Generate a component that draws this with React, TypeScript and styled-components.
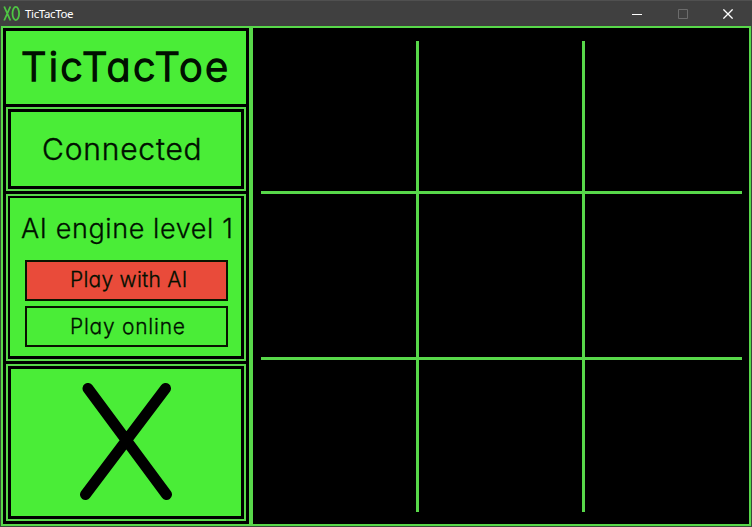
import React from "react";
import styled, { createGlobalStyle } from "styled-components";

const GREEN = "#4aed37";
const LINE = "#58d84a";

const GlobalStyle = createGlobalStyle`
  * { box-sizing: border-box; }
  body { margin: 0; background: #000; overflow: hidden; }
`;

const Window = styled.div`
  width: 752px;
  height: 527px;
  display: flex;
  flex-direction: column;
  background: #3a4a38;
  padding: 0 1px 1px;
`;

const TitleBar = styled.header`
  height: 26px;
  flex: none;
  margin: 0 -1px;
  padding: 0 1px 0 3px;
  display: flex;
  align-items: center;
  background: #404040;
  border-top: 1px solid #505050;
  color: #fff;
`;

const Caption = styled.span`
  flex: 1;
  margin-left: 5px;
  font: 11.5px/16px "Noto Sans", sans-serif;
  letter-spacing: -0.35px;
`;

const WindowButton = styled.div`
  width: 45.5px;
  height: 24px;
  display: flex;
  align-items: center;
  justify-content: center;
`;

const Client = styled.main`
  flex: 1;
  display: grid;
  grid-template-columns: 246px 4px 1fr;
  border: 2px solid ${LINE};
  background: #000;
`;

const Sidebar = styled.aside`
  display: grid;
  grid-template-rows: 73px 84px 167px 157px;
  gap: 3px;
  padding: 3px;
  font-family: Inter, sans-serif;
  font-feature-settings: "cv11";
`;

const Divider = styled.div`
  background: ${LINE};
`;

const Heading = styled.h1`
  margin: 0;
  background: ${GREEN};
  display: flex;
  padding: 10px 0 0 15px;
`;

const Panel = styled.section<{ $top?: number; $left?: number }>`
  border: 2px solid ${LINE};
  background: #000;
  padding: ${(p) => p.$top ?? 3}px 3px 3px ${(p) => p.$left ?? 3}px;
  display: flex;
`;

const Fill = styled.div<{ $pad: string }>`
  flex: 1;
  min-width: 0;
  background: ${GREEN};
  display: flex;
  flex-direction: column;
  align-items: flex-start;
  padding: ${(p) => p.$pad};
`;

const Label = styled.span<{ $size: number; $spacing: number; $stroke: number; $weight?: number }>`
  display: block;
  white-space: nowrap;
  color: #001000;
  font-size: ${(p) => p.$size}px;
  line-height: 1.3;
  font-weight: ${(p) => p.$weight ?? 300};
  letter-spacing: ${(p) => p.$spacing}px;
  -webkit-text-stroke: ${(p) => p.$stroke}px currentColor;
  stroke-linejoin: round;
`;

const ModeButton = styled.button<{ $active?: boolean }>`
  width: 203px;
  height: 41px;
  margin: 0 0 5px;
  padding: ${(p) => (p.$active ? 4 : 5)}px 0 0 43px;
  border: 2px solid #081400;
  background: ${(p) => (p.$active ? "#e94b3a" : GREEN)};
  font-family: inherit;
  font-feature-settings: inherit;
  text-align: left;
  display: flex;
`;

const LevelRow = styled.div`
  height: 62px;
  padding: 13px 0 0 11px;
`;

const Modes = styled.div`
  padding-left: 15px;
`;

const Board = styled.div`
  display: grid;
  grid-template-columns: 155px 163px 157px;
  grid-template-rows: 150px 163px 152px;
  gap: 3px;
  width: 481px;
  height: 471px;
  margin: 13px 0 0 8px;
  background: ${LINE};
`;

const Cell = styled.div`
  background: #000;
`;

export default function App() {
  return (
    <>
      <GlobalStyle />
      <Window>
        <TitleBar>
          <svg width="17" height="17" viewBox="0 0 17 17" fill="none" stroke="#4fc544" strokeWidth="1.8">
            <path d="M1.2 1.5L7.4 15.5M7.4 1.5L1.2 15.5" />
            <ellipse cx="12.8" cy="8.5" rx="3.3" ry="6.6" />
          </svg>
          <Caption>TicTacToe</Caption>
          <WindowButton>
            <svg width="10" height="10" shapeRendering="crispEdges"><path d="M0 5.5H10" stroke="#fff" /></svg>
          </WindowButton>
          <WindowButton>
            <svg width="10" height="10"><path d="M.5 .5h9v9h-9z" fill="none" stroke="#6c6c6c" /></svg>
          </WindowButton>
          <WindowButton>
            <svg width="10" height="10"><path d="M.4 .4L9.6 9.6M9.6 .4L.4 9.6" stroke="#fff" strokeWidth="1.3" /></svg>
          </WindowButton>
        </TitleBar>
        <Client>
          <Sidebar>
            <Heading>
              <Label $size={40} $spacing={2.3} $stroke={1.5} $weight={300}>TicTacToe</Label>
            </Heading>
            <Panel>
              <Fill $pad="18px 0 0 31px">
                <Label $size={30} $spacing={0.8} $stroke={0.4}>Connected</Label>
              </Fill>
            </Panel>
            <Panel $top={2} $left={2}>
              <Fill $pad="0">
                <LevelRow>
                  <Label $size={27} $spacing={0.6} $stroke={0.3}>AI engine level 1</Label>
                </LevelRow>
                <Modes>
                  <ModeButton $active>
                    <Label $size={21} $spacing={0.25} $stroke={0.3}>Play with AI</Label>
                  </ModeButton>
                  <ModeButton>
                    <Label $size={21} $spacing={0.75} $stroke={0.3}>Play online</Label>
                  </ModeButton>
                </Modes>
              </Fill>
            </Panel>
            <Panel>
              <Fill $pad="14px 0 0 69px">
                <svg width="94" height="118" viewBox="0 0 94 118" stroke="#000" strokeWidth="11" strokeLinecap="round">
                  <path d="M8 5.5L86.5 111.5M85.5 5.5L5.5 111.5" />
                </svg>
              </Fill>
            </Panel>
          </Sidebar>
          <Divider />
          <Board>
            {Array.from({ length: 9 }, (_, i) => (
              <Cell key={i} />
            ))}
          </Board>
        </Client>
      </Window>
    </>
  );
}
